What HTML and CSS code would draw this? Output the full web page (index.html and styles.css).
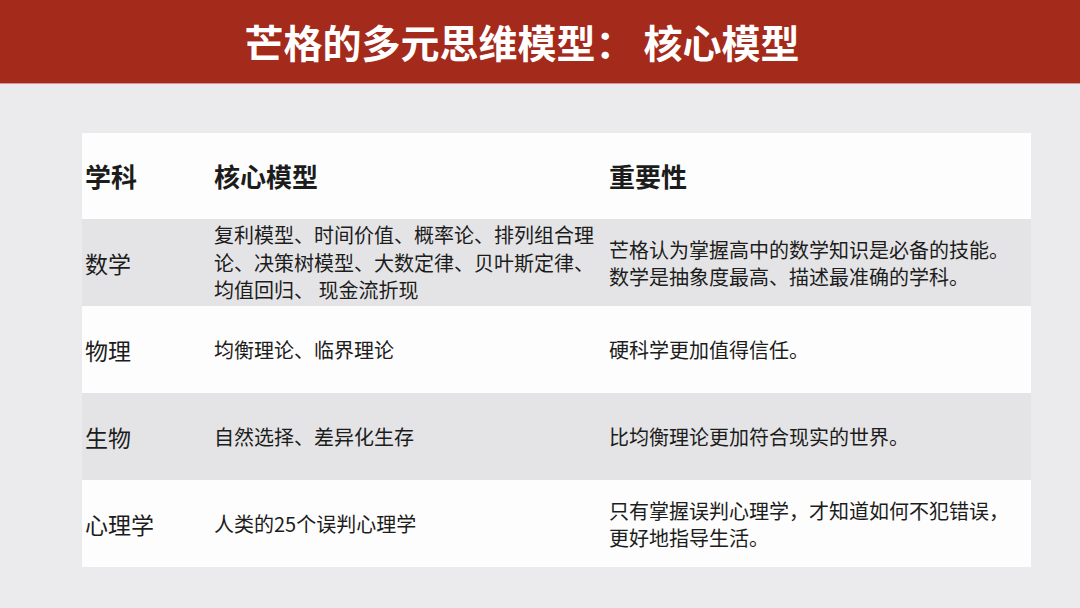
FILE: index.html
```html
<!DOCTYPE html>
<html lang="zh">
<head>
<meta charset="utf-8">
<link rel="stylesheet" href="styles.css">
</head>
<body>
<header class="banner"><h1 class="title">芒格的多元思维模型： 核心模型</h1></header>
<main class="content">
  <div class="table">
    <div class="row head">
      <div class="c1">学科</div>
      <div class="c2">核心模型</div>
      <div class="c3">重要性</div>
    </div>
    <div class="row alt">
      <div class="c1">数学</div>
      <div class="c2">复利模型、时间价值、概率论、排列组合理论、决策树模型、大数定律、贝叶斯定律、均值回归、 现金流折现</div>
      <div class="c3">芒格认为掌握高中的数学知识是必备的技能。数学是抽象度最高、描述最准确的学科。</div>
    </div>
    <div class="row">
      <div class="c1">物理</div>
      <div class="c2">均衡理论、临界理论</div>
      <div class="c3">硬科学更加值得信任。</div>
    </div>
    <div class="row alt">
      <div class="c1">生物</div>
      <div class="c2">自然选择、差异化生存</div>
      <div class="c3">比均衡理论更加符合现实的世界。</div>
    </div>
    <div class="row">
      <div class="c1">心理学</div>
      <div class="c2">人类的25个误判心理学</div>
      <div class="c3">只有掌握误判心理学，才知道如何不犯错误，更好地指导生活。</div>
    </div>
  </div>
</main>
</body>
</html>
```

FILE: styles.css
```css
html, body {
  margin: 0;
  padding: 0;
}
body {
  width: 1080px;
  height: 608px;
  overflow: hidden;
  background: #ebeaed;
  font-family: "Noto Sans CJK SC", "Noto Sans", sans-serif;
  color: #1c1c1c;
}
.banner {
  height: 83px;
  background: #a42a1b;
  border-bottom: 1px solid #d49a92;
  display: flex;
  align-items: center;
  justify-content: center;
}
.title {
  margin: 0;
  padding-right: 36px;
  font-size: 39px;
  font-weight: 700;
  color: #ffffff;
  line-height: 1;
  letter-spacing: 0;
}
.content {
  padding: 49px 0 0 82px;
}
.table {
  width: 949px;
  display: flex;
  flex-direction: column;
}
.row {
  height: 87px;
  display: grid;
  grid-template-columns: 132px 395px 422px;
  align-items: center;
  background: #fdfdfd;
}
.row.head {
  height: 86px;
}
.row.alt {
  background: #e4e4e6;
}
.c1 {
  padding-left: 3px;
  font-size: 23px;
  line-height: 28px;
}
.c2 {
  padding-right: 8px;
  font-size: 20px;
  line-height: 27.5px;
}
.c3 {
  padding-right: 8px;
  font-size: 20px;
  line-height: 27px;
}
.head .c1, .head .c2, .head .c3 {
  font-size: 26px;
  font-weight: 700;
  line-height: 32px;
}
```
